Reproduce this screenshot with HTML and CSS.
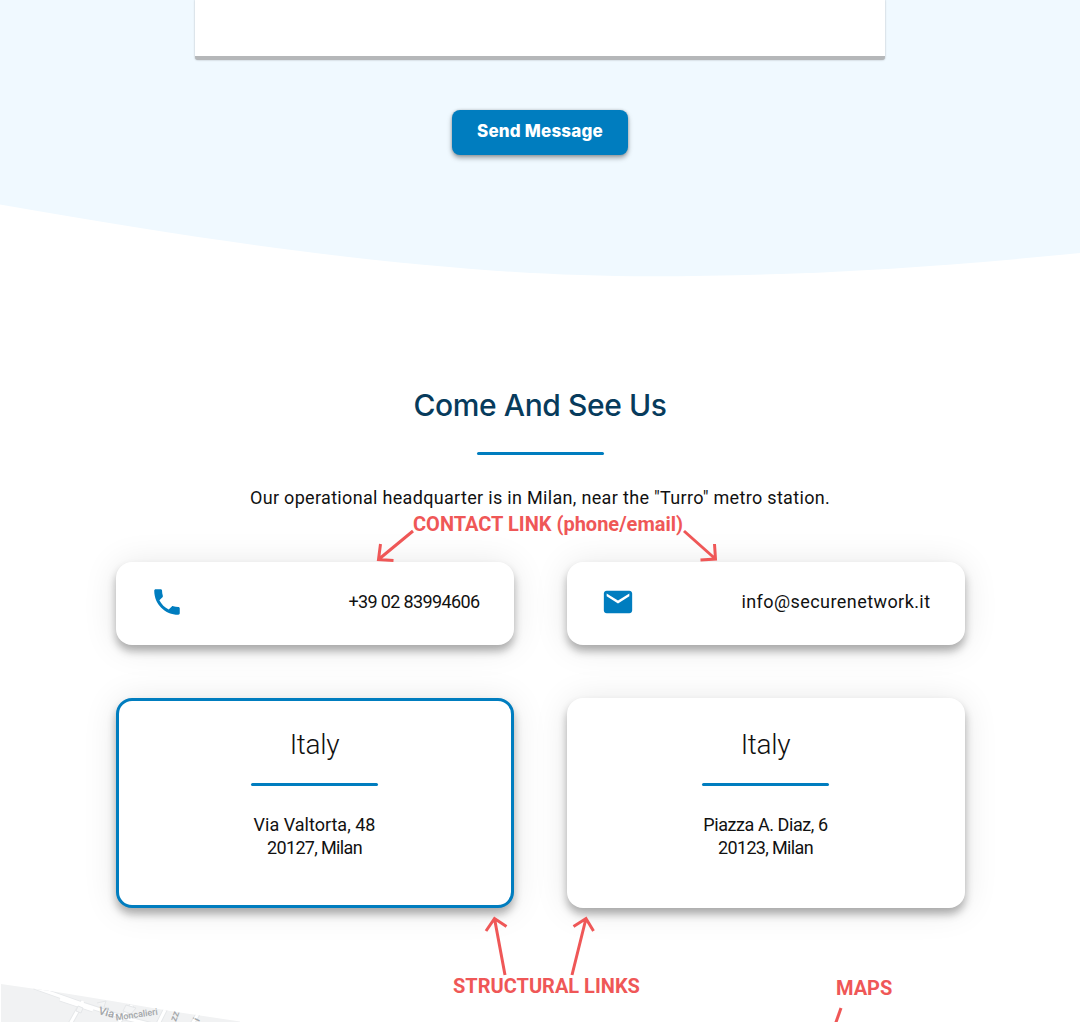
FILE: index.html
```html
<!DOCTYPE html>
<html lang="en">
<head>
<meta charset="utf-8">
<title>Contact us</title>
<link rel="stylesheet" href="styles.css">
</head>
<body>
<main class="page">
  <section class="form-section">
    <svg class="wave" viewBox="0 0 1080 280" aria-hidden="true"><path d="M0 0H1080V253C940 267 800 276.3 650 276.3C480 276.3 280 254 0 204.5Z"/></svg>
    <div class="message-field"></div>
    <button class="send">Send Message</button>
  </section>
  <section class="visit">
    <h2 class="title"><span>Come And See Us</span></h2>
    <div class="rule"></div>
    <p class="intro"><span>Our operational headquarter is in Milan, near the "Turro" metro station.</span></p>
    <div class="cards">
      <a class="card contact">
        <svg class="icon" viewBox="0 0 24 24"><path d="M6.62 10.79c1.44 2.83 3.76 5.14 6.59 6.59l2.2-2.2c.27-.27.67-.36 1.02-.24 1.12.37 2.33.57 3.57.57.55 0 1 .45 1 1V20c0 .55-.45 1-1 1-9.39 0-17-7.61-17-17 0-.55.45-1 1-1h3.5c.55 0 1 .45 1 1 0 1.25.2 2.45.57 3.57.11.35.03.74-.25 1.02l-2.2 2.2z"/></svg>
        <span class="phone">+39 02 83994606</span>
      </a>
      <a class="card contact">
        <svg class="icon" viewBox="0 0 24 24"><path d="M20 4H4c-1.1 0-1.99.9-1.99 2L2 18c0 1.1.9 2 2 2h16c1.1 0 2-.9 2-2V6c0-1.1-.9-2-2-2zm0 4l-8 5-8-5V6l8 5 8-5v2z"/></svg>
        <span class="email">info@securenetwork.it</span>
      </a>
      <a class="card office selected">
        <h3 class="country">Italy</h3>
        <div class="rule"></div>
        <p class="address"><span class="via">Via Valtorta, 48</span><br><span class="zip">20127, Milan</span></p>
      </a>
      <a class="card office">
        <h3 class="country">Italy</h3>
        <div class="rule"></div>
        <p class="address"><span class="piazza">Piazza A. Diaz, 6</span><br><span class="zip">20123, Milan</span></p>
      </a>
    </div>
  </section>
  <svg class="map" viewBox="0 0 260 40" aria-hidden="true">
    <defs><clipPath id="edge"><path d="M1 2L60 10.5L115 19.5L170 29L240 39.5V40H1Z"/></clipPath></defs>
    <g clip-path="url(#edge)">
      <rect class="land" width="260" height="40"/>
      <path class="road-edge" d="M34 5L82 22L125 36L165 46M83 19L70 42M60 17L93 28M132 23L119 40M166 26L158 42M198 32L192 42"/>
      <path class="road" d="M34 5L82 22L125 36L165 46M83 19L70 42M60 17L93 28M132 23L119 40M166 26L158 42M198 32L192 42"/>
      <path class="block" d="M78 24l5 2-2 5-5-2zM97 21l9-2-2 6 5 1M126 23l10 3-5 6-8-3z"/>
    </g>
    <g class="street">
      <text x="98" y="32" transform="rotate(15 98 32)">Via</text>
      <text class="name" x="116" y="38.5" transform="rotate(-8 116 38.5)">Moncalieri</text>
      <text class="minor" x="176" y="40" transform="rotate(-70 176 40)">zz</text>
      <text class="minor" x="199" y="40" transform="rotate(-65 199 40)">i</text>
    </g>
  </svg>
  <svg class="arrows" viewBox="0 0 1080 1022" aria-hidden="true">
    <path d="M413 531L378.5 559.5M380.5 544L378.5 559.5L393.5 560.5"/>
    <path d="M684 531L715.5 559M714.5 544L715.5 559L700.5 560"/>
    <path d="M505 975L494.5 918.5M486 931L494.5 918.5L506.5 926.5"/>
    <path d="M572 975L586 918.5M573.5 926.5L586 918.5L593.5 931"/>
    <path d="M841 1008L835 1025"/>
  </svg>
  <span class="note note-contact">CONTACT LINK (phone/email)</span>
  <span class="note note-links">STRUCTURAL LINKS</span>
  <span class="note note-maps">MAPS</span>
</main>
</body>
</html>
```
FILE: styles.css
```css
* { box-sizing: border-box; }
body { margin: 0; background: #fff; color: #111; font: 18px/23px Roboto, sans-serif; }
h2, h3, p { margin: 0; }
.page { position: relative; width: 1080px; height: 1022px; overflow: hidden; }
.form-section { position: relative; height: 280px; display: flex; flex-direction: column; align-items: center; }
.wave { position: absolute; inset: 0; width: 1080px; height: 280px; fill: #f0f9ff; }
.message-field { position: relative; width: 690px; height: 60px; background: #fff; border-bottom: 4px solid #b5b7b9; border-radius: 0 0 3px 3px; box-shadow: 0 0 2px rgba(0,0,0,.3); }
.send { position: relative; margin-top: 50px; width: 176px; height: 45px; padding: 0 0 3px; border: 0; border-radius: 8px; background: #007dbf; color: #fff; font: 800 17px/20px Inter, sans-serif; letter-spacing: .2px; white-space: nowrap; box-shadow: 0 3px 5px rgba(0,0,0,.35), 0 0 3px rgba(0,0,0,.2); }
.visit { padding-top: 106px; display: flex; flex-direction: column; align-items: center; }
.title { height: 38px; color: #073b5c; font: 450 30px/38px Inter, sans-serif; letter-spacing: -.4px; white-space: nowrap; }
.rule { width: 127px; height: 3px; border-radius: 2px; background: #007dbf; }
.title + .rule { margin-top: 28px; }
.intro { margin-top: 31px; letter-spacing: .32px; white-space: nowrap; }
.cards { margin-top: 53px; display: grid; grid-template-columns: 398px 398px; grid-template-rows: 83px 210px; gap: 53px; }
.card { border-radius: 16px; background: #fff; box-shadow: 0 6px 9px rgba(0,0,0,.3), 0 2px 34px rgba(0,0,0,.1); }
.contact { display: flex; align-items: center; justify-content: space-between; padding: 0 34px 4px; white-space: nowrap; }
.icon { width: 34px; height: 34px; fill: #007dbf; }
.phone { letter-spacing: -.63px; }
.email { letter-spacing: .43px; }
.zip { letter-spacing: -.65px; }
.piazza { letter-spacing: -.43px; }
.office { display: flex; flex-direction: column; align-items: center; border: 3px solid transparent; text-align: center; }
.selected { border-color: #007dbf; }
.country { margin-top: 26px; height: 35px; font: 300 28px/36px Roboto, sans-serif; letter-spacing: -.3px; }
.office .rule { margin-top: 21px; }
.address { margin-top: 27px; }
.map { position: absolute; left: 0; top: 982px; width: 260px; height: 40px; }
.land { fill: #f1f2f3; }
.road { fill: none; stroke: #fff; stroke-width: 3; }
.road-edge { fill: none; stroke: #e6e8ea; stroke-width: 5; }
.block { fill: #f4f5f6; stroke: #e4e6e8; stroke-width: 1; }
.street { fill: #a3a6a9; font: 500 11px Roboto, sans-serif; }
.street .name { font-size: 9px; }
.street .minor { font-size: 10px; }
.arrows { position: absolute; inset: 0; width: 1080px; height: 1022px; fill: none; stroke: #ef5757; stroke-width: 3; }
.note { position: absolute; color: #ef5757; font: 700 20px/24px Roboto, sans-serif; white-space: nowrap; }
.note-contact { left: 413px; top: 512px; }
.note-links { left: 453px; top: 974px; }
.note-maps { left: 836px; top: 976px; }
```
